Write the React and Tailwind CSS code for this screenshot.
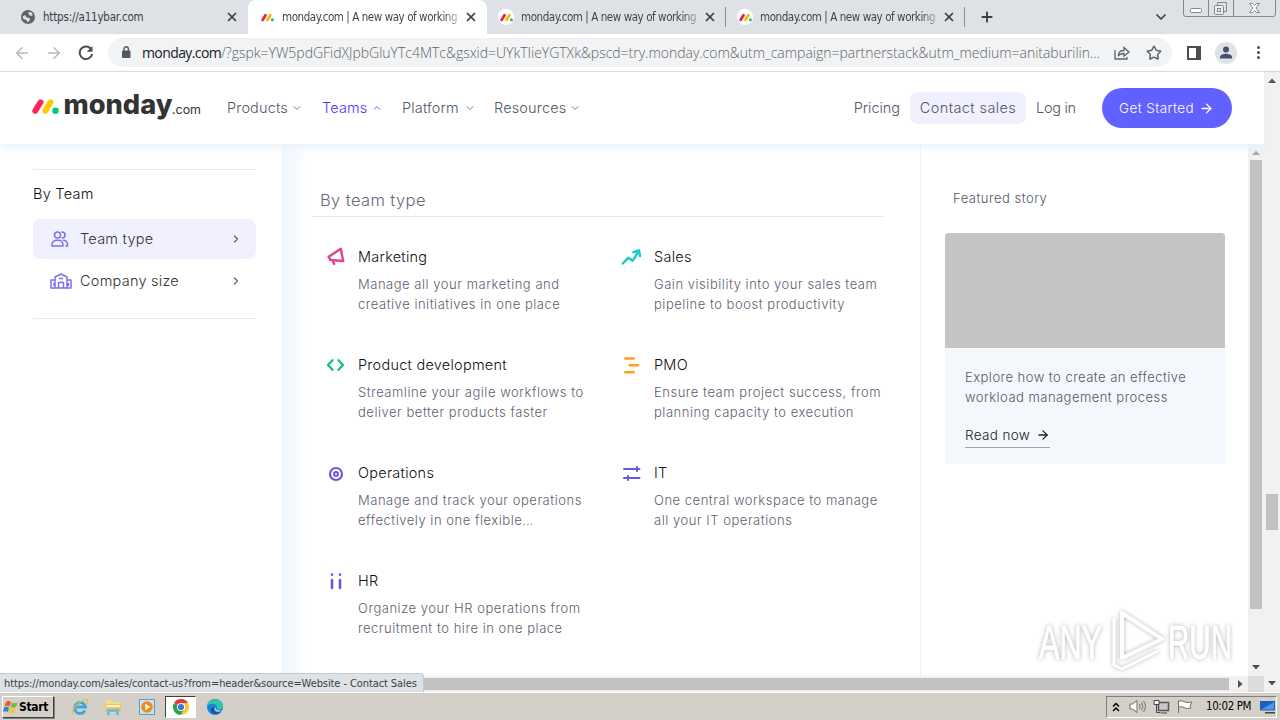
import React from "react";
import { ArrowLeft, ArrowRight, ChevronDown, ChevronRight, ChevronUp, Plus, Star, X } from "lucide-react";

const url =
  "/?gspk=YW5pdGFidXJpbGluYTc4MTc&gsxid=UYkTIieYGTXk&pscd=try.monday.com&utm_campaign=partnerstack&utm_medium=anitaburilin...";

const tabs = [
  { title: "monday.com | A new way of working", active: true },
  { title: "monday.com | A new way of working" },
  { title: "monday.com | A new way of working" },
];

const teams = [
  {
    icon: "marketing",
    title: "Marketing",
    lines: ["Manage all your marketing and", "creative initiatives in one place"],
  },
  {
    icon: "sales",
    title: "Sales",
    lines: ["Gain visibility into your sales team", "pipeline to boost productivity"],
  },
  {
    icon: "dev",
    title: "Product development",
    lines: ["Streamline your agile workflows to", "deliver better products faster"],
  },
  {
    icon: "pmo",
    title: "PMO",
    lines: ["Ensure team project success, from", "planning capacity to execution"],
  },
  {
    icon: "operations",
    title: "Operations",
    lines: ["Manage and track your operations", "effectively in one flexible…"],
  },
  {
    icon: "it",
    title: "IT",
    lines: ["One central workspace to manage", "all your IT operations"],
  },
  {
    icon: "hr",
    title: "HR",
    lines: ["Organize your HR operations from", "recruitment to hire in one place"],
  },
];

function Mark({ className }) {
  return (
    <svg viewBox="0 0 28 18" className={className} fill="none" strokeLinecap="round">
      <path d="M3.5 14.2 9.6 4" stroke="#e3264f" strokeWidth="6" />
      <path d="M14 14.2 20.1 4" stroke="#ffb800" strokeWidth="6" />
      <circle cx="24.5" cy="14" r="3.3" fill="#00ca72" />
    </svg>
  );
}

function TeamIcon({ name }) {
  const svg = "mt-[3px] h-5 w-5 shrink-0 overflow-visible";
  switch (name) {
    case "marketing":
      return (
        <svg viewBox="0 0 20 20" className={svg} fill="none" stroke="#e2448f" strokeWidth="2.4" strokeLinejoin="round" strokeLinecap="round">
          <path d="M14.8 1.8 17.2 14 4.6 13 2.6 9.8Z" />
          <path d="M7 14l1.2 3" />
        </svg>
      );
    case "sales":
      return (
        <svg viewBox="0 0 20 20" className={svg} fill="none" stroke="#16cdc7" strokeWidth="2.5" strokeLinejoin="round" strokeLinecap="round">
          <path d="M.8 16.500 6.200 10.800l4.600 2.800L16.500 4.500" />
          <path d="M11.500 5.200 17 3.400l1 5.600" />
        </svg>
      );
    case "dev":
      return (
        <svg viewBox="0 0 20 20" className={svg} fill="none" stroke="#1dc07e" strokeWidth="2.4" strokeLinejoin="round" strokeLinecap="round">
          <path d="M6.500 5.200 2 10l4.500 4.800M12.500 5.200 17 10l-4.500 4.800" />
        </svg>
      );
    case "pmo":
      return (
        <svg viewBox="0 0 20 20" className={svg} fill="none" stroke="#ff9f1a" strokeWidth="2.5" strokeLinecap="round">
          <path d="M3.3 3.5h8.4M7.6 10.3h8.6M3.3 17.2h8.4" />
        </svg>
      );
    case "operations":
      return (
        <svg viewBox="0 0 20 20" className={svg} fill="none" stroke="#665ae0">
          <circle cx="10" cy="11" r="6" strokeWidth="2.2" />
          <circle cx="10" cy="11" r="2" strokeWidth="2" />
        </svg>
      );
    case "it":
      return (
        <svg viewBox="0 0 20 20" className={svg} fill="none" stroke="#665ae0" strokeWidth="2" strokeLinecap="round">
          <path d="M2 6h15.500M2 15h15.500M15 4v4M6 13v4" />
        </svg>
      );
    default:
      return (
        <svg viewBox="0 0 20 20" className={svg} fill="none" stroke="#665ae0" strokeWidth="2.6" strokeLinecap="round">
          <path d="M6 9v8M14 9v8" />
          <path d="M6 3.5v.2M14 3.5v.2" />
        </svg>
      );
  }
}

function TabStrip() {
  return (
    <div className="relative flex h-[34px] items-center bg-[#dee1e6] font-['DejaVu_Sans_Condensed','DejaVu_Sans',sans-serif] text-[11.5px] text-[#3c4043]">
      <div className="flex h-full w-[248px] items-center pl-[21px] pr-[9px]">
        <svg viewBox="0 0 14 14" className="h-[14px] w-[14px]">
          <circle cx="7" cy="7" r="7" fill="#5f6368" />
          <path d="M1.500 6.500 4 5l1.500 2.500 3 .5L9 10l-2.500 2.500-1-2.500-3-1ZM7 2.500l3-.5 2 3-2.500 1L8 4.500Z" fill="#dee1e6" />
        </svg>
        <span className="ml-2 flex-1 whitespace-nowrap pt-px tracking-[-0.2px]">https://a11ybar.com</span>
        <X className="h-[14px] w-[14px]" strokeWidth={3} />
      </div>
      {tabs.map((tab, i) => (
        <div
          key={i}
          className={`flex h-full w-[239px] items-center pl-[11px] pr-[9px] ${tab.active ? "rounded-t-lg bg-white" : ""}`}
        >
          <span className={`flex h-4 w-4 items-center justify-center rounded-full ${tab.active ? "" : "bg-white"}`}>
            <Mark className="h-[9px] w-[13px]" />
          </span>
          <span className="ml-[7px] w-[179px] whitespace-nowrap bg-gradient-to-r from-[#3c4043] from-90% to-[#3c4043]/20 bg-clip-text pt-px tracking-[-0.43px] text-transparent">
            {tab.title}
          </span>
          <X className="ml-auto h-[14px] w-[14px] shrink-0" strokeWidth={3} />
          {i > 0 && <i className="-mr-[9px] ml-2 h-5 w-px shrink-0 bg-[#8b8e94]" />}
        </div>
      ))}
      <Plus className="ml-[14px] h-4 w-4" strokeWidth={2.8} />
      <ChevronDown className="ml-[158px] h-4 w-4" strokeWidth={2.6} />
      <svg viewBox="0 0 94 17" className="absolute right-[3px] top-0 h-[17px] w-[94px]" fill="none" stroke="#85888f">
        <path d="M.5 0v14q0 2.500 2.500 2.500h87q2.500 0 2.500-2.500V0M25.500 0v16M50.500 0v16" />
        <rect x="7.500" y="8.500" width="11" height="4" rx="1" fill="#fff" />
        <path d="M34.500 5V2.500h9v9H41" />
        <rect x="31.500" y="5.500" width="9" height="9" rx="1" fill="#eee" />
        <rect x="34.500" y="8.500" width="3" height="3" />
        <path d="M66.500 3.500h3l2 2 2-2h3l-3.500 4.500 3.500 4.500h-3l-2-2-2 2h-3L70 8Z" fill="#fff" />
      </svg>
    </div>
  );
}

function Toolbar() {
  return (
    <div className="flex h-[38px] items-center border-b border-[#d5d7da] bg-white pl-[13px]">
      <ArrowLeft className="h-[18px] w-[18px] text-[#b4b6b9]" />
      <ArrowRight className="ml-[14px] h-[18px] w-[18px] text-[#b4b6b9]" />
      <svg viewBox="0 0 16 16" className="ml-[15px] h-4 w-4" fill="none" stroke="#4b4e52" strokeWidth="2">
        <path d="M13.600 4.800A6.300 6.300 0 1 0 14.200 9" />
        <path d="M14.500 1v5.800H8.800Z" fill="#4b4e52" stroke="none" />
      </svg>
      <div className="ml-[14px] flex h-[29px] w-[1064px] items-center rounded-full bg-[#f1f3f4] pl-[13px] text-[#5f6368]">
        <svg viewBox="0 0 10 13" className="h-[13px] w-[10px] shrink-0">
          <rect x="1" y="4.500" width="8.500" height="7.500" rx="1" fill="#55585c" />
          <path d="M3 5V3a2.200 2.200 0 0 1 4.400 0v2" fill="none" stroke="#55585c" strokeWidth="1.400" />
        </svg>
        <div className="ml-[11px] w-[966px] whitespace-nowrap font-['Open_Sans','Noto_Sans',sans-serif] text-[14px] font-light tracking-[-0.02px]">
          <span className="font-normal tracking-[-0.6px] text-[#202124]">monday.com</span>
          {url}
        </div>
        <svg viewBox="0 0 16 14" className="ml-[6px] h-[14px] w-4" fill="none" stroke="#5f6368" strokeWidth="1.300">
          <path d="M1 4v9h12v-2" />
          <path d="M4.500 9.500c0-3 2-5 5.500-5V1.500L15 6l-5 4.200V7.500c-2.500 0-4 .5-5.500 2Z" />
        </svg>
        <Star className="ml-[16px] h-4 w-4" strokeWidth={2.2} />
      </div>
      <svg viewBox="0 0 14 14" className="ml-[15px] h-[14px] w-[14px]">
        <path d="M1 1h12v12H1Z" fill="none" stroke="#4b4e52" strokeWidth="2" />
        <path d="M9 0h5v14H9Z" fill="#4b4e52" />
      </svg>
      <svg viewBox="0 0 22 22" className="ml-[14px] h-[22px] w-[22px]">
        <circle cx="11" cy="11" r="11" fill="#dee1e6" />
        <circle cx="11" cy="7.500" r="3" fill="#46506b" />
        <path d="M5 16.500v-1.500c0-2.200 4-3.200 6-3.200s6 1 6 3.200v1.500Z" fill="#46506b" />
      </svg>
      <div className="ml-[20px] flex flex-col gap-[2px]">
        <i className="h-[3px] w-[3px] rounded-full bg-[#4b4e52]" />
        <i className="h-[3px] w-[3px] rounded-full bg-[#4b4e52]" />
        <i className="h-[3px] w-[3px] rounded-full bg-[#4b4e52]" />
      </div>
    </div>
  );
}

function NavItem({ label, open, className }) {
  const Chevron = open ? ChevronUp : ChevronDown;
  return (
    <div className={`flex items-center justify-between ${open ? "text-[#5034ff]" : "text-[#535768]"} ${className}`}>
      <span>{label}</span>
      <Chevron className="-mr-px h-3 w-3 opacity-75" strokeWidth={2} />
    </div>
  );
}

function Header() {
  return (
    <header className="relative z-10 flex h-[72px] w-full shrink-0 items-center bg-white pl-8 text-[14.500px] font-light tracking-[0.15px] text-[#535768] shadow-[0_3px_8px_#e6f1fa]">
      <svg viewBox="0 0 170 34" className="h-[34px] w-[170px] overflow-visible">
        <g fill="none" strokeLinecap="round" strokeWidth="6">
          <path d="M3.300 19.800 8.500 11.300" stroke="#fb275d" />
          <path d="M13.300 19.800l5.200-8.500" stroke="#ffcc00" />
        </g>
        <circle cx="23.500" cy="19.700" r="3.200" fill="#00ca72" />
        <g fill="#333" letterSpacing="0" className="font-['Inter',sans-serif]">
          <text x="31.500" y="23" fontSize="27" fontWeight="800" textLength="109" lengthAdjust="spacingAndGlyphs">
            monday
          </text>
          <text x="140" y="23" fontSize="12.500" fontWeight="400" textLength="29" lengthAdjust="spacingAndGlyphs">
            .com
          </text>
        </g>
      </svg>
      <NavItem label="Products" className="ml-[25px] w-[75px]" />
      <NavItem label="Teams" open className="ml-5 w-[60px]" />
      <NavItem label="Platform" className="ml-5 w-[73px]" />
      <NavItem label="Resources" className="ml-[19px] w-[86px]" />
      <div className="ml-auto mr-8 flex items-center">
        <span className="tracking-[-0.05px]">Pricing</span>
        <span className="ml-[10px] flex h-8 w-[116px] items-center justify-center rounded-lg bg-[#f0f0ff] tracking-[0.4px]">
          Contact sales
        </span>
        <span className="ml-[10px] w-10 whitespace-nowrap tracking-[-0.3px]">Log in</span>
        <button className="ml-[26px] flex h-10 w-[130px] items-center rounded-full bg-[#6161ff] pl-[17px] text-[13.500px] tracking-[0.4px] text-white">
          Get Started
          <ArrowRight className="ml-[5px] h-[15px] w-[15px]" strokeWidth={2.2} />
        </button>
      </div>
    </header>
  );
}

function Sidebar() {
  return (
    <aside className="w-[282px] shrink-0 pl-[33px] pr-[26px] pt-[25px] text-[14.500px] font-light tracking-[0.25px] text-[#333]">
      <div className="h-[150px] border-y border-[#ebebee] pt-3">
        <div className="h-6 leading-6 text-[#111]">By Team</div>
        <div className="mt-[13px] flex h-10 items-center rounded-lg bg-[#f0f0ff] pl-[17px] pr-4">
          <svg viewBox="0 0 20 18" className="h-[18px] w-5" fill="none" stroke="#7a70ea" strokeWidth="1.500" strokeLinecap="round" strokeLinejoin="round">
            <circle cx="7.500" cy="5" r="3" />
            <path d="M2 16v-1.500a4.500 4.500 0 0 1 4.500-4.200h2a4.500 4.500 0 0 1 4.500 4.200V16Z" />
            <path d="M12 2a3 3 0 0 1 0 6M13.500 10.300a4.500 4.500 0 0 1 4 4.200V16H16" />
          </svg>
          <span className="ml-[10px] flex-1">Team type</span>
          <ChevronRight className="-mr-0.5 h-3 w-3 text-[#666]" strokeWidth={2.6} />
        </div>
        <div className="mt-0.5 flex h-10 items-center pl-[17px] pr-4">
          <svg viewBox="0 0 22 16" className="h-4 w-[22px]" fill="none" stroke="#7a70ea" strokeWidth="1.500" strokeLinejoin="round">
            <path d="M5 15V4l6-3 6 3v11M5 7H1v8h20V7h-4M8.500 15V9.500h5V15M4 10v3M18.500 10v3M9 5.500h4" />
          </svg>
          <span className="ml-2 flex-1">Company size</span>
          <ChevronRight className="-mr-0.5 h-3 w-3 text-[#666]" strokeWidth={2.6} />
        </div>
      </div>
    </aside>
  );
}

function Featured() {
  return (
    <section className="w-[328px] shrink-0 border-l border-[#eef0f4] pl-6 pt-[44px] text-[13px] font-light leading-5 text-[#535768]">
      <h3 className="ml-2 tracking-[0.5px]">Featured story</h3>
      <div className="mt-[25px] h-[231px] w-[280px] overflow-hidden rounded-t bg-[#f4f7fc]">
        <div className="h-[115px] bg-[#c4c4c4]" />
        <div className="px-5 pt-[19px]">
          <p className="whitespace-nowrap tracking-[0.47px]">
            Explore how to create an effective
            <br />
            workload management process
          </p>
          <a className="mt-[16px] inline-flex h-[25px] w-[85px] items-center justify-between whitespace-nowrap border-b border-[#a4a6ae] text-[13.500px] tracking-[0.35px] text-[#222]">
            Read now
            <ArrowRight className="h-[14px] w-[14px]" strokeWidth={2.2} />
          </a>
        </div>
      </div>
    </section>
  );
}

function MegaMenu() {
  return (
    <div className="flex h-[532px] w-[1248px] bg-white">
      <Sidebar />
      <div className="w-[30px] shrink-0 bg-gradient-to-r from-[#eff7ff] to-white" />
      <main className="w-[608px] shrink-0 pt-[44px] font-light">
        <h2 className="h-[29px] w-[572px] border-b border-[#e4e6ec] pl-2 text-[16.500px] leading-[25px] tracking-[0.4px] text-[#676879]">
          By team type
        </h2>
        <div className="ml-[14px] mt-[27px] grid grid-cols-[296px_296px]">
          {teams.map((team) => (
            <div key={team.title} className="flex h-[108px] gap-3">
              <TeamIcon name={team.icon} />
              <div>
                <h4 className="h-[26px] text-[14.500px] leading-[26px] tracking-[0.25px] text-[#111]">{team.title}</h4>
                <p className="mt-1 text-[13px] leading-5 tracking-[0.53px] text-[#5f6072]">
                  {team.lines.map((line) => (
                    <span key={line} className="block whitespace-nowrap">
                      {line}
                    </span>
                  ))}
                </p>
              </div>
            </div>
          ))}
        </div>
      </main>
      <Featured />
    </div>
  );
}

function Arrow({ d, className, color = "#505050" }) {
  return (
    <svg viewBox="0 0 16 16" className={`h-4 w-4 shrink-0 ${className || ""}`}>
      <path d={d} fill={color} />
    </svg>
  );
}

const UP = "M4 11h8L8 6.500Z";
const DOWN = "M4 6h8l-4 4.500Z";

function Taskbar() {
  return (
    <div className="flex h-7 items-center border-t border-white bg-[#d4d0c8] pl-[2px] font-['DejaVu_Sans_Condensed','DejaVu_Sans',sans-serif] text-[11px] text-black">
      <button className="flex h-[22px] w-[52px] items-center border border-b-[#404040] border-l-white border-r-[#404040] border-t-white pt-px text-[12px] font-bold tracking-[-0.3px] shadow-[1px_1px_0_#808080]">
        <svg viewBox="0 0 16 14" className="h-[14px] w-4 shrink-0">
          <path d="M3 2q2-2 5 0L6.500 6.500q-3-1.500-5 0Z" fill="#e8592b" />
          <path d="M9 2.500q3 1.500 6 0L13 7q-3 1.500-5.500 0Z" fill="#77b843" />
          <path d="M1 7.500q2.500-1.500 5 0L5 12q-2.500-1.500-5 0Z" fill="#2f86d6" />
          <path d="M7 8q3 1.500 5.500 0L11 12.500q-3 1.500-5.500 0Z" fill="#f6c62d" />
        </svg>
        Start
      </button>
      <svg viewBox="0 0 18 18" className="ml-[17px] h-[18px] w-[18px]" fill="none">
        <path d="M14 12.500A5.500 5.500 0 1 1 14.500 9H5" stroke="#36a9e0" strokeWidth="2.800" />
        <path d="M2 16C-1 12 10 1 16 2c2 1 0 4 0 4" stroke="#e7bd45" strokeWidth="1.400" />
      </svg>
      <svg viewBox="0 0 18 18" className="ml-[15px] h-[18px] w-[18px]">
        <path d="M2 2h5l1 2h8v3H2Z" fill="#f5dd8c" />
        <path d="M1 6h16v8H1Z" fill="#e8c765" />
        <path d="M2 7h14v2H2Z" fill="#fff3bd" />
        <path d="M3 17v-6h12v6h-3v-3H6v3Z" fill="#77b8e0" />
      </svg>
      <svg viewBox="0 0 16 16" className="ml-[17px] h-4 w-4">
        <path d="M.5.5h15v15H.5Z" fill="#c7e3f6" stroke="#5b9ccb" />
        <circle cx="8" cy="8" r="5.800" fill="#f28a1b" />
        <path d="M6.300 4.800v6.400L11.500 8Z" fill="#fff" />
      </svg>
      <div className="ml-[10px] flex h-[22px] w-[31px] items-center justify-center border border-b-white border-l-[#404040] border-r-white border-t-[#404040] bg-white">
        <svg viewBox="0 0 16 16" className="h-4 w-4">
          <path d="M8 8 1.070 4A8 8 0 0 1 14.930 4Z" fill="#e33b2e" />
          <path d="M8 8 1.070 4A8 8 0 0 0 8 16l3.500-6Z" fill="#2ba24c" />
          <path d="M8 4h6.930A8 8 0 0 1 8 16l3.500-6Z" fill="#fcc934" />
          <circle cx="8" cy="8" r="4" fill="#fff" />
          <circle cx="8" cy="8" r="3.100" fill="#3577e5" />
        </svg>
      </div>
      <svg viewBox="0 0 16 16" className="ml-[11px] h-4 w-4">
        <circle cx="8" cy="8" r="8" fill="#1684d8" />
        <path d="M0 7C1-2 16-2 16 7c0 3-4 4-6 3 1-5-6-7-10-3Z" fill="#35c4a8" />
        <path d="M7 8c-2 4 3 7 7 4-3 5-10 3-10-1 0-2 1-3 3-3Z" fill="#14529f" />
        <path d="M9 8q-1 3 3 3.500 2 0 3-1-2 3-5 2-4-1-1-4.500Z" fill="#d4d0c8" />
      </svg>
      <div className="ml-auto mr-[3px] flex h-[22px] w-[171px] items-center border border-b-white border-l-[#808080] border-r-white border-t-[#808080] pl-[5px]">
        <svg viewBox="0 0 8 10" className="h-[10px] w-2" fill="none" stroke="#000" strokeWidth="1.500">
          <path d="M1 4.500 4 1.500l3 3M1 9l3-3 3 3" />
        </svg>
        <svg viewBox="0 0 17 15" className="ml-[9px] h-[15px] w-[17px]" fill="none" stroke="#6e6e6e">
          <path d="M1 5h2.500L8 1.500v12L3.500 10H1Z" fill="#fff" />
          <path d="M10.500 5q1.500 2.500 0 5M12.500 3.500q3 4 0 8M14.500 2q4 5.500 0 11" />
        </svg>
        <svg viewBox="0 0 17 15" className="ml-[7px] h-[15px] w-[17px]" fill="none" stroke="#555">
          <path d="M5.500 3.500h10v8h-10Z" fill="#c8c8c8" strokeWidth="1.500" />
          <path d="M8 14h6M3.500 6v7.500h4" stroke="#444" />
          <path d="M1 1.500h5v4H1Z" fill="#fff" stroke="#444" />
        </svg>
        <svg viewBox="0 0 16 15" className="ml-[7px] h-[15px] w-4" fill="#fff" stroke="#6e6e6e">
          <path d="M1.500 14V1.500M2 2q3-1 6 1 3 1 7 0l-2 4 1 2q-4 1-6 0-3-2-6-1" />
        </svg>
        <span className="ml-[13px] w-[47px] whitespace-nowrap pt-px text-[11.500px] tracking-[-0.4px]">10:02 PM</span>
        <svg viewBox="0 0 16 14" className="ml-[7px] h-[14px] w-4 shrink-0">
          <path d="M0 1h15v9.500H0Z" fill="#1c5fc0" />
          <path d="M1 9.500 14 2v7.500Z" fill="#4b98ea" />
          <path d="M5 12h10v1.500H5Z" fill="#444" />
        </svg>
      </div>
    </div>
  );
}

function Watermark() {
  return (
    <svg viewBox="0 0 210 70" className="absolute left-[1034px] top-[606px] h-[70px] w-[210px] overflow-visible [filter:drop-shadow(0_0_2px_#b4b4b4)]">
      <g fill="#fff" fontFamily="Liberation Sans" fontSize="49" stroke="#fff" strokeWidth="1">
        <text x="5" y="53" textLength="63" lengthAdjust="spacingAndGlyphs">
          ANY
        </text>
        <text x="134" y="53" textLength="64" lengthAdjust="spacingAndGlyphs">
          RUN
        </text>
      </g>
      <g fill="none" stroke="#fff" strokeWidth="4" strokeLinejoin="round">
        <path d="M88 7v45l40-19Z" />
        <path d="M80 12v47l8 4 36-18" strokeWidth="3" />
      </g>
    </svg>
  );
}

export default function App() {
  return (
    <div className="relative flex h-[720px] w-[1280px] flex-col overflow-hidden bg-white">
      <TabStrip />
      <Toolbar />
      <div className="flex h-[620px]">
        <div className="flex w-[1264px] flex-col font-['Inter','Liberation_Sans',sans-serif]">
          <Header />
          <div className="flex h-[532px]">
            <MegaMenu />
            <div className="flex w-4 flex-col items-center bg-[#f1f1f1]">
              <Arrow d={UP} color="#a3a3a3" />
              <i className="h-[449px] w-3 bg-[#c1c1c1]" />
              <Arrow d={DOWN} className="mb-px mt-auto" />
            </div>
          </div>
          <div className="flex h-4 items-center bg-[#f1f1f1]">
            <i className="h-3 w-[1229px] bg-[#c1c1c1]" />
            <Arrow d="M6 4v8l4.500-4Z" className="ml-[3px]" />
            <i className="ml-auto h-4 w-4 bg-[#dcdcdc]" />
          </div>
        </div>
        <div className="flex w-4 flex-col items-center bg-[#f1f1f1]">
          <Arrow d={UP} />
          <i className="mt-[406px] h-9 w-3 bg-[#c1c1c1]" />
          <Arrow d={DOWN} className="mb-px mt-auto" />
        </div>
      </div>
      <Taskbar />
      <div className="absolute left-0 top-[673px] flex h-[19px] w-[424px] items-center whitespace-nowrap rounded-tr border-r border-t border-[#c6c8cb] bg-[#dee1e6] pl-1 pt-0.5 font-['DejaVu_Sans_Condensed','DejaVu_Sans',sans-serif] text-[11px] tracking-[-0.09px] text-[#3c4043]">
        https://monday.com/sales/contact-us?from=header&amp;source=Website - Contact Sales
      </div>
      <Watermark />
    </div>
  );
}
